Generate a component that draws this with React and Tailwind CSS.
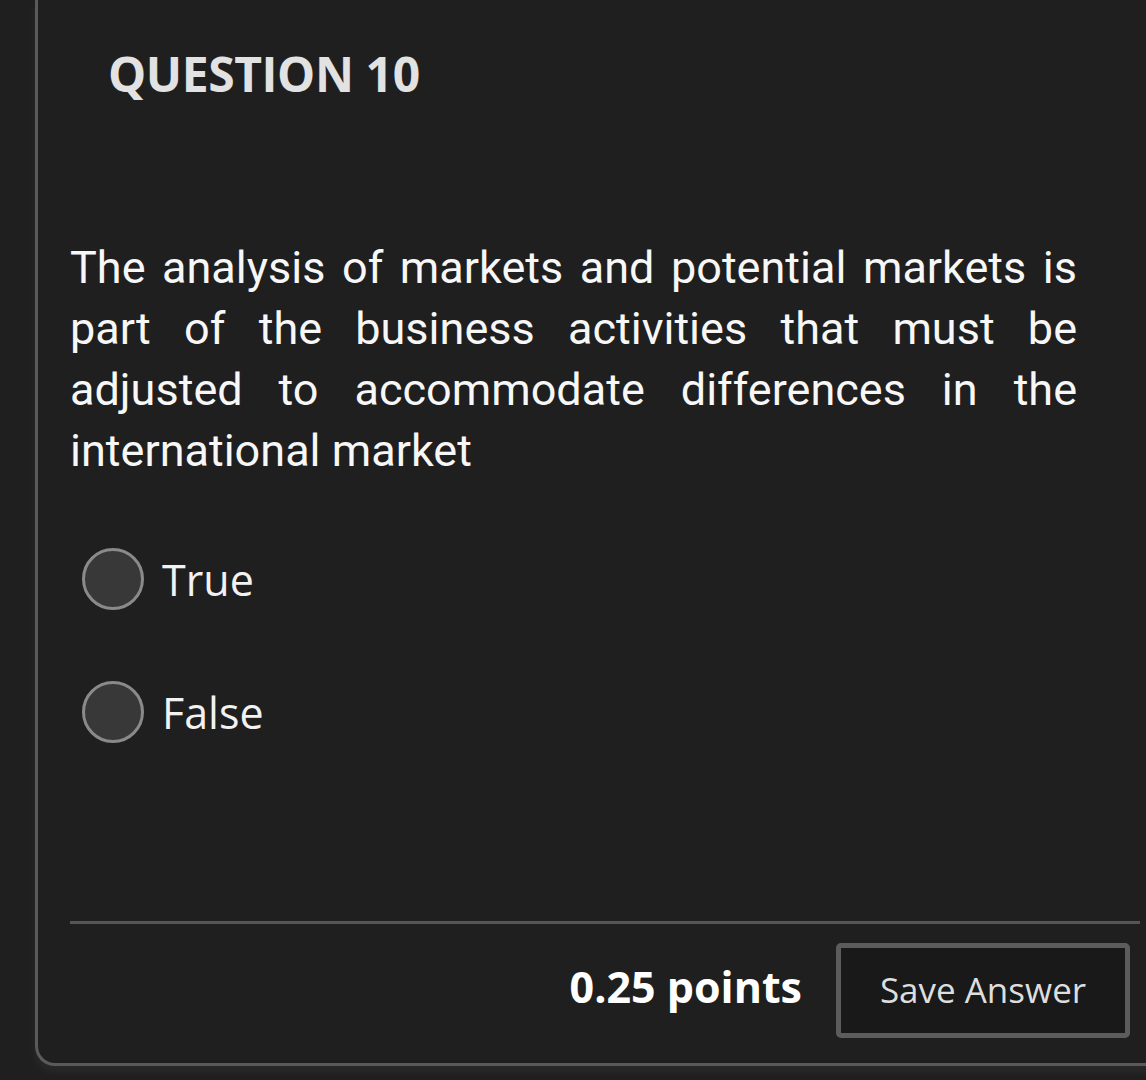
import React from "react";

function Radio({ label }) {
  return (
    <label className="flex items-center h-[62px] pl-3 cursor-pointer">
      <span className="w-[62px] h-[62px] rounded-full border-[3px] border-[#8a8a8a] bg-[#383838] shrink-0" />
      <span className="ml-[18px] text-[43px] leading-none text-[#f2f2f2] font-['Open_Sans',sans-serif]">
        {label}
      </span>
    </label>
  );
}

export default function App() {
  return (
    <div className="w-[1146px] h-[1080px] overflow-hidden bg-[#1f1f1f]">
      <div className="ml-[35px] w-[1140px] h-[1066px] border-l-[3px] border-b-[3px] border-[#5a5a5a] rounded-bl-[20px] bg-[#1f1f1f] shadow-[0_6px_10px_rgba(255,255,255,0.05)] pl-8 pr-[35px] flex flex-col">
        <h2 className="mt-[40px] pl-[38px] text-[48px] leading-[68px] tracking-[-0.4px] font-bold text-[#e2e2e2] font-['Open_Sans',sans-serif]">
          QUESTION 10
        </h2>

        <p className="mt-[129px] w-[1007px] text-[45px] leading-[61px] text-justify text-[#f7f7f7] font-['Roboto',sans-serif]">
          The analysis of markets and potential markets is part of the business activities that must be
          adjusted to accommodate differences in the international market
        </p>

        <div className="mt-[67px] flex flex-col gap-[71px]">
          <Radio label="True" />
          <Radio label="False" />
        </div>

        <div className="mt-[178px] border-t-[3px] border-[#555555]" />

        <div className="mt-[19px] flex items-center justify-end pr-[10px]">
          <span className="mb-[6px] text-[43px] font-bold text-white font-['Open_Sans',sans-serif]">0.25 points</span>
          <button className="ml-[34px] w-[294px] h-[95px] border-[5px] border-[#5c5c5c] rounded-[5px] bg-[#191919] text-[35px] text-[#dedede] font-['Open_Sans',sans-serif]">
            Save Answer
          </button>
        </div>
      </div>
    </div>
  );
}
